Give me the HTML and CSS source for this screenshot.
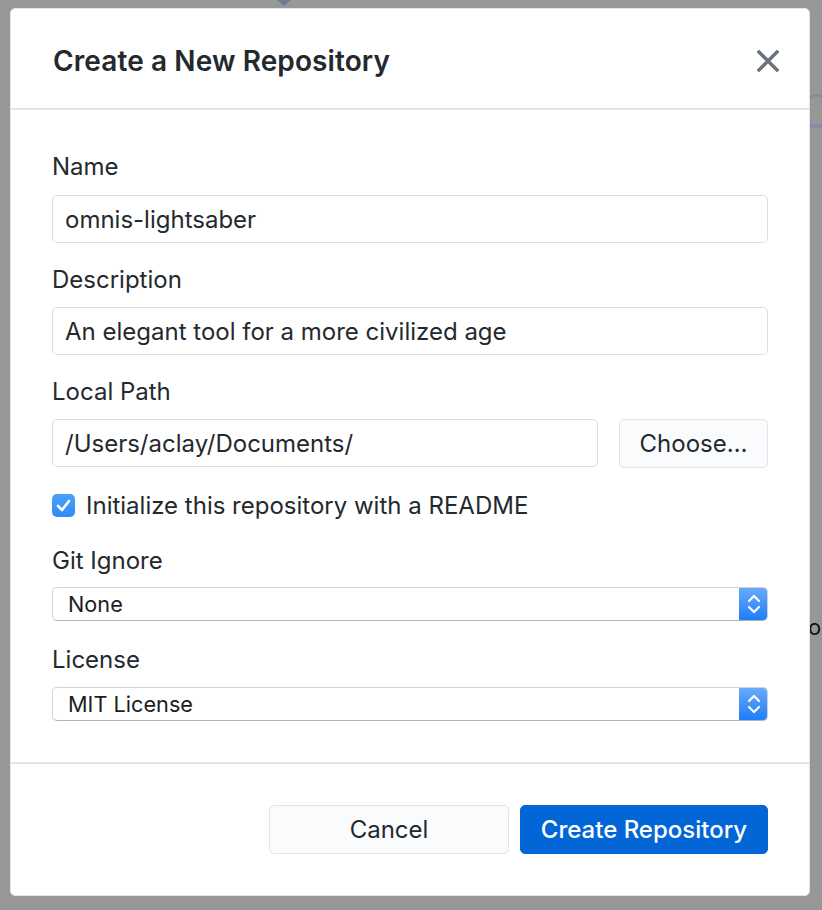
FILE: index.html
```html
<!DOCTYPE html>
<html lang="en">
<head>
<meta charset="utf-8">
<title>Create a New Repository</title>
<link rel="stylesheet" href="styles.css">
</head>
<body>
<div class="backdrop">
  <span class="bg-arrow"></span>
  <span class="bg-ring"></span>
  <span class="bg-letter">o</span>
</div>
<div class="stage">
  <div class="dialog">
    <header class="dialog-header">
      <h1 class="dialog-title">Create a New Repository</h1>
      <button class="close-btn" aria-label="Close">
        <svg width="22" height="22" viewBox="0 0 22 22"><path d="M2 2 L20 20 M20 2 L2 20" stroke="#6a737d" stroke-width="3.4" stroke-linecap="square"/></svg>
      </button>
    </header>
    <div class="dialog-body">
      <label class="field-label first">Name</label>
      <div class="text-input">omnis-lightsaber</div>

      <label class="field-label gap">Description</label>
      <div class="text-input">An elegant tool for a more civilized age</div>

      <label class="field-label gap">Local Path</label>
      <div class="path-row">
        <div class="text-input grow">/Users/aclay/Documents/</div>
        <button class="btn choose">Choose…</button>
      </div>

      <div class="check-row">
        <span class="checkbox">
          <svg width="15" height="13" viewBox="0 0 15 13"><path d="M2 7 L6 11 L13 2" fill="none" stroke="#fff" stroke-width="2.6" stroke-linecap="round" stroke-linejoin="round"/></svg>
        </span>
        <span class="check-label">Initialize this repository with a README</span>
      </div>

      <label class="field-label gap2">Git Ignore</label>
      <div class="select">
        <span class="select-value">None</span>
        <span class="stepper"><svg width="14" height="22" viewBox="0 0 14 22"><path d="M2 8 L7 3 L12 8 M2 14 L7 19 L12 14" fill="none" stroke="#fff" stroke-width="2.2" stroke-linecap="round" stroke-linejoin="round"/></svg></span>
      </div>

      <label class="field-label gap3">License</label>
      <div class="select">
        <span class="select-value">MIT License</span>
        <span class="stepper"><svg width="14" height="22" viewBox="0 0 14 22"><path d="M2 8 L7 3 L12 8 M2 14 L7 19 L12 14" fill="none" stroke="#fff" stroke-width="2.2" stroke-linecap="round" stroke-linejoin="round"/></svg></span>
      </div>
    </div>
    <footer class="dialog-footer">
      <button class="btn cancel">Cancel</button>
      <button class="btn primary">Create Repository</button>
    </footer>
  </div>
</div>
</body>
</html>
```

FILE: styles.css
```css
* { box-sizing: border-box; }
html, body {
  margin: 0;
  padding: 0;
  width: 822px;
  height: 910px;
  overflow: hidden;
  background: #979797;
  font-family: Inter, "Noto Sans", sans-serif;
  color: #24292e;
}
.backdrop { position: absolute; inset: 0; }
.bg-arrow {
  position: absolute;
  left: 277px; top: 0;
  width: 0; height: 0;
  border-left: 7px solid transparent;
  border-right: 7px solid transparent;
  border-top: 6px solid #6f7d8f;
}
.bg-ring {
  position: absolute;
  left: 800px; top: 94px;
  width: 34px; height: 34px;
  border-radius: 50%;
  border: 3px solid #7d8ea5;
}
.bg-letter {
  position: absolute;
  left: 808px; top: 612px;
  font-size: 22px;
  line-height: 30px;
  color: #111;
}
.stage {
  position: relative;
  padding: 8px 0 0 10px;
}
.dialog {
  width: 800px;
  height: 888px;
  background: #fff;
  border-radius: 5px;
  border: 1px solid #dfe2e6;
  display: flex;
  flex-direction: column;
}
.dialog-header {
  height: 101px;
  display: flex;
  align-items: center;
  justify-content: space-between;
  padding: 4px 30px 0 42px;
  border-bottom: 2px solid #e1e4e8;
}
.dialog-title {
  margin: 0;
  font-size: 28px;
  font-weight: 600;
  letter-spacing: 0.1px;
  color: #24292e;
}
.close-btn {
  border: 0;
  background: none;
  padding: 0;
  width: 22px;
  height: 22px;
  display: flex;
}
.dialog-body {
  display: flex;
  flex-direction: column;
  padding: 43px 41px 40px 41px;
  flex: 1;
}
.field-label {
  font-size: 24px;
  line-height: 28px;
  margin-bottom: 13px;
}
.field-label.first { margin-bottom: 14px; }
.field-label.gap { margin-top: 23px; }
.field-label.gap2 { margin-top: 30px; margin-bottom: 12px; }
.field-label.gap3 { margin-top: 25px; margin-bottom: 13px; }
.text-input {
  height: 48px;
  border: 1px solid #dadde1;
  border-radius: 5px;
  padding: 0 12px;
  display: flex;
  align-items: center;
  font-size: 24px;
  color: #24292e;
}
.path-row {
  display: flex;
  gap: 21px;
}
.grow { flex: 1; }
.btn {
  font-family: Inter, "Noto Sans", sans-serif;
  font-size: 24px;
  height: 49px;
  border-radius: 5px;
  border: 1px solid #e1e4e8;
  background: #fafbfc;
  color: #24292e;
  padding: 0;
}
.choose { width: 149px; }
.check-row {
  display: flex;
  align-items: center;
  gap: 11px;
  margin-top: 25px;
  height: 24px;
}
.checkbox {
  width: 23px;
  height: 23px;
  border-radius: 5px;
  background: linear-gradient(#4aa0fb, #2f8cf6);
  display: flex;
  align-items: center;
  justify-content: center;
}
.check-label { font-size: 24px; }
.select {
  height: 34px;
  border: 1px solid #d2d2d2;
  border-bottom-color: #b2b2b2;
  border-radius: 5px;
  display: flex;
  align-items: center;
  overflow: hidden;
}
.select-value {
  flex: 1;
  padding-left: 15px;
  font-size: 21.7px;
  color: #1d1d1d;
}
.stepper {
  width: 29px;
  height: 34px;
  margin: -1px -1px -1px 0;
  background: linear-gradient(#6cabfb, #1b7cf8);
  border-radius: 0 5px 5px 0;
  display: flex;
  align-items: center;
  justify-content: center;
}
.dialog-footer {
  border-top: 2px solid #e1e4e8;
  display: flex;
  justify-content: flex-end;
  gap: 11px;
  padding: 41px 41px 41px 41px;
}
.cancel { width: 240px; }
.primary {
  width: 248px;
  background: #0366d6;
  border-color: #0366d6;
  color: #fff;
  font-weight: 500;
}
```
